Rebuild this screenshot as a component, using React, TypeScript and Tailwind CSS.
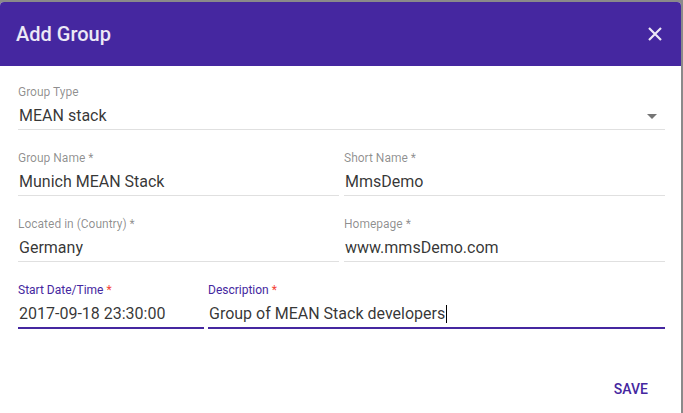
const Field = ({
  label,
  value,
  focused = false,
  caret = false,
  select = false,
  className = "",
}: {
  label: string;
  value: string;
  focused?: boolean;
  caret?: boolean;
  select?: boolean;
  className?: string;
}) => (
  <div className={className}>
    <div className={`text-[12px] leading-[14px] ${focused ? "text-[#4527a0]" : "text-black/45"}`}>
      {label}
      {label !== "Group Type" && <span className={focused ? "text-[#f44336]" : ""}>*</span>}
    </div>
    <div
      className={`mt-[7px] flex items-center justify-between pl-[1px] pb-[3px] text-[16px] leading-[20px] text-black/80 ${
        focused ? "border-b-2 border-[#4527a0] pb-[2px]" : "border-b border-[#e0e0e0]"
      }`}
    >
      <span className="flex items-center">
        {value}
        {caret && <span className="ml-[1px] inline-block h-[18px] w-[1px] bg-black" />}
      </span>
      {select && (
        <svg width="10" height="5" viewBox="0 0 10 5" className="mr-[8px]">
          <path d="M0 0h10L5 5z" fill="#757575" />
        </svg>
      )}
    </div>
  </div>
);

const App = () => {
  return (
    <div className="h-[413px] w-[683px] bg-[#8a8a8a] pt-[2px] pr-[2px] font-['Roboto',sans-serif]">
      <div className="h-full overflow-hidden rounded-t-[4px] bg-white">
        <div className="flex h-[64px] items-center justify-between bg-[#4527a0] pl-[16px] pr-[19px]">
          <h2 className="text-[20px] font-medium text-white/90">Add Group</h2>
          <svg width="14" height="14" viewBox="0 0 14 14">
            <path d="M1 1l12 12M13 1L1 13" stroke="#ede7f6" strokeWidth="2.2" />
          </svg>
        </div>

        <div className="pl-[18px] pr-[16px] pt-[19px]">
          <Field label="Group Type" value="MEAN stack" select />

          <div className="mt-[21px] flex gap-[5px]">
            <Field className="flex-1" label="Group Name " value="Munich MEAN Stack" />
            <Field className="flex-1" label="Short Name " value="MmsDemo" />
          </div>

          <div className="mt-[21px] flex gap-[5px]">
            <Field className="flex-1" label="Located in (Country) " value="Germany" />
            <Field className="flex-1" label="Homepage " value="www.mmsDemo.com" />
          </div>

          <div className="mt-[21px] flex gap-[4px]">
            <Field className="w-[186px]" label="Start Date/Time " value="2017-09-18 23:30:00" focused />
            <Field className="flex-1" label="Description " value="Group of MEAN Stack developers" focused caret />
          </div>
        </div>

        <div className="flex justify-end pr-[17px] pt-[42px]">
          <button className="px-[16px] py-[8px] text-[14px] font-medium uppercase text-[#4527a0]">Save</button>
        </div>
      </div>
    </div>
  );
};

export default App;
